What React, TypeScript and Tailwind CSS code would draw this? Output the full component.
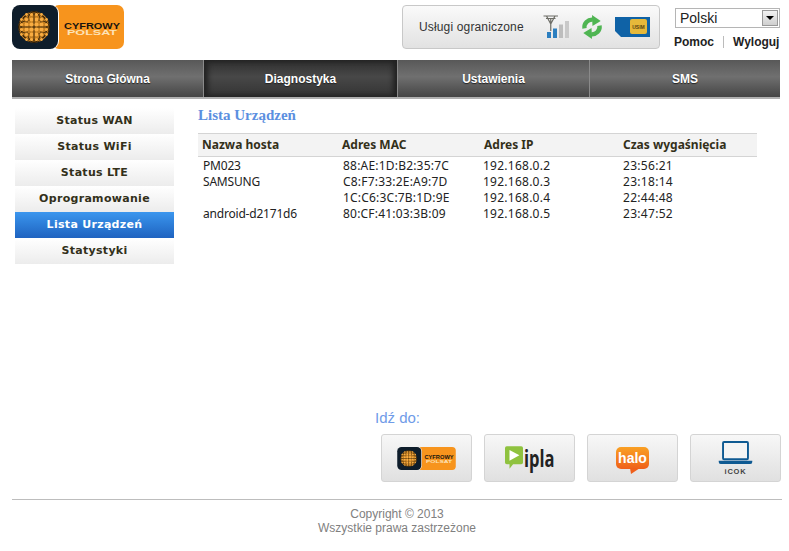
const sideItems = ["Status WAN", "Status WiFi", "Status LTE", "Oprogramowanie", "Lista Urządzeń", "Statystyki"];

const tabs = [
  { label: "Strona Główna", cls: "w-[192px]" },
  { label: "Diagnostyka", cls: "w-[194px]", active: true },
  { label: "Ustawienia", cls: "w-[192px]" },
  { label: "SMS", cls: "flex-1" },
];

const devices = [
  ["PM023", "88:AE:1D:B2:35:7C", "192.168.0.2", "23:56:21"],
  ["SAMSUNG", "C8:F7:33:2E:A9:7D", "192.168.0.3", "23:18:14"],
  ["", "1C:C6:3C:7B:1D:9E", "192.168.0.4", "22:44:48"],
  ["android-d2171d6", "80:CF:41:03:3B:09", "192.168.0.5", "23:47:52"],
];

function Logo({ className }: { className: string }) {
  const dots: [number, number, number][] = [];
  for (let y = -12.5; y <= 12.5; y += 5) {
    for (let x = -12.5; x <= 12.5; x += 5) {
      const d = x * x + y * y;
      if (d <= 230) dots.push([x, y, 2.1 - d / 300]);
    }
  }
  return (
    <svg viewBox="0 0 112 44" className={className}>
      <rect x="40" width="72" height="44" rx="7" fill="#f7941d" />
      <rect width="47" height="44" rx="8" fill="#fff" />
      <rect width="46" height="44" rx="8" fill="#0e1d2b" />
      <circle cx="22" cy="22" r="15.500" fill="#c47f22" />
      <g stroke="#2a1a06" strokeWidth="0.8" fill="none">
        <ellipse cx="22" cy="22" rx="7.500" ry="15.500" />
        <ellipse cx="22" cy="22" rx="13" ry="15.500" />
        <ellipse cx="22" cy="22" rx="15.500" ry="7.500" />
        <ellipse cx="22" cy="22" rx="15.500" ry="13" />
        <path d="M22 6.500V37.500M6.500 22H37.500" />
      </g>
      {dots.map(([x, y, r], i) => (
        <circle key={i} cx={22 + x} cy={22 + y} r={r} fill="#f9ad42" />
      ))}
      <text x="80" y="23.500" textAnchor="middle" fontFamily="Liberation Sans, sans-serif" fontWeight="700" fontSize="9.500" fill="#17140f" textLength="56" lengthAdjust="spacingAndGlyphs">CYFROWY</text>
      <text x="80" y="30" textAnchor="middle" fontFamily="Liberation Sans, sans-serif" fontWeight="700" fontSize="7" fill="#fde3b8" textLength="50" lengthAdjust="spacingAndGlyphs">POLSAT</text>
    </svg>
  );
}

function SignalIcon() {
  return (
    <svg viewBox="0 0 28 24" className="w-[28px] h-[24px]">
      <path d="M0.500 1H15M3 3.500H12.500M7.750 4V16M3.500 1L7.750 9L12 1" stroke="#6d6d66" strokeWidth="1.200" fill="none" />
      <rect x="4" y="17" width="4" height="6" fill="#2c7fc0" />
      <rect x="10" y="13.500" width="4" height="9.500" fill="#2c7fc0" />
      <rect x="16" y="9.500" width="4" height="13.500" fill="#bdbdbd" />
      <rect x="22" y="6" width="4" height="17" fill="#c9c9c9" />
    </svg>
  );
}

function RefreshIcon() {
  const half = (
    <>
      <path d="M3.800 13.500C3 8 7.500 3.500 13 4" stroke="#4fb552" strokeWidth="4.800" fill="none" />
      <path d="M12 -1L21.500 5.500L12.500 11Z" fill="#4fb552" />
    </>
  );
  return (
    <svg viewBox="0 0 24 24" className="w-[22px] h-[24px] overflow-visible">
      <g>{half}</g>
      <g transform="rotate(180 12 12)">{half}</g>
    </svg>
  );
}

function SimIcon() {
  return (
    <svg viewBox="0 0 35 20" className="w-[35px] h-[20px]">
      <path d="M0 0H35V20H6L0 14Z" fill="#0f62a6" />
      <rect x="15" y="2" width="17" height="15" rx="2" fill="#e6b93a" />
      <text x="23.500" y="11.500" textAnchor="middle" fontFamily="Liberation Sans, sans-serif" fontSize="5" fontWeight="700" fill="#5a4410">USIM</text>
    </svg>
  );
}

function IplaIcon() {
  return (
    <div className="flex items-center gap-[1px]">
      <svg viewBox="0 0 20 26" className="w-[18px] h-[24px]">
        <path d="M2 0H18Q20 0 20 2V18Q20 20 18 20H9L5 25L5 20H2Q0 20 0 18V2Q0 0 2 0Z" fill="#8fc23f" />
        <path d="M5 4L16 10L5 16Z" fill="#fff" />
      </svg>
      <span className="font-['Open_Sans',sans-serif] font-bold text-[23px] leading-none text-[#222] scale-x-[0.72] origin-left w-[30px]">ipla</span>
    </div>
  );
}

function HaloIcon() {
  return (
    <div className="relative w-[33px] h-[27px] mt-[4px]">
      <div className="h-[22px] rounded-[5px] bg-gradient-to-b from-[#f9a023] to-[#ef5f1a] flex items-center justify-center">
        <span className="font-['Liberation_Sans',sans-serif] font-bold text-[14px] leading-none text-white">halo</span>
      </div>
      <svg viewBox="0 0 10 6" className="absolute left-[14px] top-[21px] w-[10px] h-[6px]">
        <path d="M0 0H10L1 6Z" fill="#ef5f1a" />
      </svg>
    </div>
  );
}

function IcokIcon() {
  return (
    <div className="flex flex-col items-center">
      <svg viewBox="0 0 35 24" className="w-[35px] h-[23px]">
        <rect x="4.500" y="1" width="26" height="18" rx="1" fill="#f4f4f4" stroke="#0f5a92" strokeWidth="2" />
        <path d="M0 20.500H35V22Q35 24 33 24H2Q0 24 0 22Z" fill="#0f5a92" />
      </svg>
      <span className="font-['Liberation_Sans',sans-serif] font-bold text-[7.500px] leading-none tracking-[0.8px] text-[#444] mt-[4px]">iCOK</span>
    </div>
  );
}

function LinkButton({ children }: { children: React.ReactNode }) {
  return (
    <div className="w-[91px] h-[48px] rounded-[3px] border border-[#d4d4d4] bg-gradient-to-b from-[#f7f7f7] to-[#e0e0e0] flex items-center justify-center">
      {children}
    </div>
  );
}

export default function App() {
  return (
    <div className="w-[789px] h-[551px] bg-white overflow-hidden font-['Liberation_Sans',sans-serif]">
      {/* Top bar */}
      <header className="h-[60px] pl-[12px] flex items-start">
        <Logo className="w-[112px] h-[44px] mt-[5px]" />
        <div className="ml-[278px] mt-[5px] w-[258px] h-[44px] rounded-[4px] border border-[#c8c8c8] bg-gradient-to-b from-[#fafafa] to-[#e2e2e2] flex items-center pl-[16px]">
          <span className="text-[12px] tracking-[0.15px] text-[#333] w-[124px] whitespace-nowrap">Usługi ograniczone</span>
          <SignalIcon />
          <span className="w-[10px]" />
          <RefreshIcon />
          <span className="w-[12px]" />
          <SimIcon />
        </div>
        <div className="ml-[15px] mt-[8px] w-[105px]">
          <div className="h-[20px] border border-[#b5b5b5] flex items-center justify-between pl-[4px] pr-[1px] bg-white">
            <span className="text-[14px] leading-none text-[#222]">Polski</span>
            <div className="w-[16px] h-[16px] border border-[#999] bg-gradient-to-b from-[#f2f2f2] to-[#cfcfcf] flex items-center justify-center">
              <span className="w-0 h-0 border-x-[4px] border-x-transparent border-t-[4px] border-t-black" />
            </div>
          </div>
          <div className="mt-[7px] -ml-[1px] flex items-center text-[12px] font-bold text-[#222] leading-[14px] whitespace-nowrap">
            <span>Pomoc</span>
            <span className="mx-[9px] w-px h-[12px] bg-[#bbb]" />
            <span>Wyloguj</span>
          </div>
        </div>
      </header>

      {/* Main tabs */}
      <nav className="ml-[12px] w-[768px] h-[39px] flex border-b-2 border-[#b0b0b0] bg-gradient-to-b from-[#585858] via-[#707070] via-45% to-[#454545]">
        {tabs.map((t) => (
          <div
            key={t.label}
            className={`${t.cls} flex items-center justify-center text-[12px] font-bold text-white [text-shadow:0_1px_1px_#222] border-r border-[#8a8a8a] last:border-r-0 ${
              t.active ? "bg-gradient-to-b from-[#2e2e2e] via-[#484848] via-45% to-[#333333] shadow-[inset_4px_0_5px_#222,inset_-4px_0_5px_#222]" : ""
            }`}
          >
            {t.label}
          </div>
        ))}
      </nav>

      <main className="h-[300px] flex items-start pl-[15px]">
        {/* Side menu */}
        <ul className="mt-[9px] w-[159px] shrink-0">
          {sideItems.map((item) => (
            <li
              key={item}
              className={`h-[26px] flex items-center justify-center font-['DejaVu_Sans',sans-serif] font-bold text-[11px] tracking-[0.3px] ${
                item === "Lista Urządzeń"
                  ? "bg-gradient-to-b from-[#3b96ee] to-[#1f63c0] text-white"
                  : "bg-gradient-to-b from-white to-[#ececec] text-[#33301a]"
              }`}
            >
              {item}
            </li>
          ))}
        </ul>

        <section className="ml-[24px] w-[559px]">
          <h1 className="mt-[7px] h-[27px] font-['Liberation_Serif',serif] font-bold text-[15px] leading-[18px] text-[#5b8fe0]">Lista Urządzeń</h1>
          <table className="w-full border-collapse font-['Noto_Sans',sans-serif] text-[12px]">
            <thead>
              <tr className="h-[23px] bg-[#f3f3f3] border-y border-[#d4d4d4] text-left text-[#33301a]">
                <th className="w-[144px] pl-[4px] font-bold">Nazwa hosta</th>
                <th className="w-[142px] font-bold">Adres MAC</th>
                <th className="w-[139px] font-bold">Adres IP</th>
                <th className="font-bold">Czas wygaśnięcia</th>
              </tr>
            </thead>
            <tbody className="text-[#222]">
              {devices.map((d) => (
                <tr key={d[1]} className="h-[16px] leading-[15px]">
                  <td className="pl-[5px] pt-[1px] tracking-[-0.2px]">{d[0]}</td>
                  <td className="pl-[1px] pt-[1px] tracking-[0.2px]">{d[1]}</td>
                  <td className="pt-[1px] tracking-[0.25px] indent-[-1px]">{d[2]}</td>
                  <td className="pt-[1px] tracking-[0.3px]">{d[3]}</td>
                </tr>
              ))}
            </tbody>
          </table>
        </section>
      </main>

      {/* Go to */}
      <div className="ml-[375px] h-[25px] pt-[10px] box-content text-[15px] leading-[18px] text-[#6f9be8]">Idź do:</div>
      <div className="ml-[381px] flex gap-[12px]">
        <LinkButton>
          <Logo className="w-[59px] h-[23px]" />
        </LinkButton>
        <LinkButton>
          <IplaIcon />
        </LinkButton>
        <LinkButton>
          <HaloIcon />
        </LinkButton>
        <LinkButton>
          <IcokIcon />
        </LinkButton>
      </div>

      <footer className="ml-[12px] w-[770px] mt-[17px] border-t border-[#bdbdbd] pt-[7px] text-center text-[12px] leading-[14px] text-[#808080]">
        <div>Copyright © 2013</div>
        <div>Wszystkie prawa zastrzeżone</div>
      </footer>
    </div>
  );
}
